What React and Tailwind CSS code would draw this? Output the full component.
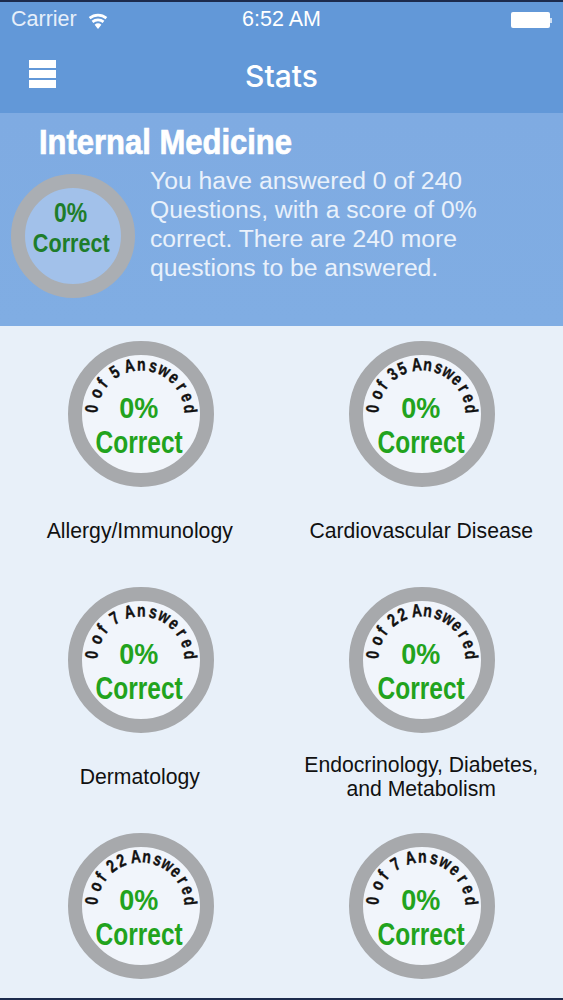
import React from 'react';

const sans = 'font-["Liberation_Sans",Arial,sans-serif]';

const topics = [
  { name: 'Allergy/Immunology', total: 5 },
  { name: 'Cardiovascular Disease', total: 35 },
  { name: 'Dermatology', total: 7 },
  { name: 'Endocrinology, Diabetes, and Metabolism', total: 22 },
  { name: '', total: 22 },
  { name: '', total: 7 },
];

// spread the letters evenly over the top of the ring, spaces count for less
function arcLetters(label) {
  const chars = label.split('');
  const gaps = chars.slice(1).map((c, i) => (c === ' ' || chars[i] === ' ' ? 0.675 : 1));
  const sum = gaps.reduce((a, b) => a + b, 0);
  const step = 168 / sum;
  let angle = -84;
  return chars.map((c, i) => {
    if (i > 0) angle += gaps[i - 1] * step;
    return { c, angle };
  });
}

function Wifi() {
  return (
    <svg width="22" height="17" viewBox="2 0 18 16" fill="white">
      <path d="M11 16l-3.2-4.1a5 5 0 0 1 6.4 0z" />
      <path d="M6.6 10.3L5 8.2a9.4 9.4 0 0 1 12 0l-1.6 2.1a6.8 6.8 0 0 0-8.8 0z" />
      <path d="M3.9 6.8L2.3 4.7a13.6 13.6 0 0 1 17.4 0l-1.6 2.1a11 11 0 0 0-14.2 0z" />
    </svg>
  );
}

function StatusBar() {
  return (
    <div className="relative flex h-[36px] items-center justify-between pl-[11px] pr-[11px] text-white">
      <div className="flex items-center gap-[10px]">
        <span className="text-[21.5px] leading-none text-[#e6effa]">Carrier</span>
        <Wifi />
      </div>
      <span className="absolute left-[242px] text-[21.5px] leading-none">6:52 AM</span>
      <div className="flex items-center">
        <div className="h-[16px] w-[39px] rounded-[2px] bg-white" />
        <div className="h-[5px] w-[2px] bg-white/70" />
      </div>
    </div>
  );
}

function NavBar() {
  return (
    <div className="relative flex h-[75px] items-center justify-center">
      <div className="absolute left-[29px] top-[22px] flex w-[27px] flex-col gap-[2px]">
        <div className="h-[8px] bg-white" />
        <div className="h-[8px] bg-white" />
        <div className="h-[8px] bg-white" />
      </div>
      <h1 className="font-['Inter',sans-serif] text-[30px] font-medium leading-none text-white">Stats</h1>
    </div>
  );
}

function Hero() {
  return (
    <div className="h-[213px] bg-gradient-to-b from-[#7fabe2] to-[#80ade3] pl-[11px]">
      <h2 className="ml-[28px] inline-block origin-left scale-x-[0.885] whitespace-nowrap pt-[10px] text-[35px] font-bold leading-[38px] text-white [-webkit-text-stroke:0.7px_white]">
        Internal Medicine
      </h2>
      <div className="mt-[13px] flex">
        <div className="flex h-[124px] w-[124px] shrink-0 flex-col items-center rounded-full border-[14px] border-[#aaaeb3] bg-[#a2c1ea] pt-[10px] font-bold text-[#1e7d2a]">
          <span className="-ml-[4px] scale-x-[0.85] text-[27px] leading-[30px]">0%</span>
          <span className="-ml-[4px] scale-x-[0.83] text-[26px] leading-[30px]">Correct</span>
        </div>
        <p className="ml-[15px] -mt-[8px] w-[345px] text-[24.7px] leading-[29px] text-[#e9f1fb]">
          You have answered 0 of 240 Questions, with a score of 0% correct. There are 240 more questions to be answered.
        </p>
      </div>
    </div>
  );
}

function Ring({ total }) {
  return (
    <div className="relative flex h-[146px] w-[146px] flex-col items-center rounded-full border-[14px] border-[#a7a9ac] bg-[#f1f5fb] pt-[36px] font-bold text-[#22a31d]">
      <svg className="absolute -left-[14px] -top-[14px]" width="146" height="146" viewBox="0 0 146 146">
        {arcLetters(`0 of ${total} Answered`).map((l, i) => (
          <text
            key={i}
            transform={`rotate(${l.angle} 73 73) translate(73 29.5) scale(0.78 1)`}
            fontFamily="Liberation Sans, Arial, sans-serif"
            fontWeight="700"
            fontSize="18"
            fill="#111"
            stroke="#111"
            strokeWidth="0.4"
            textAnchor="middle"
          >
            {l.c}
          </text>
        ))}
      </svg>
      <span className="-ml-[4px] scale-x-[0.9] text-[30px] leading-[34px]">0%</span>
      <span className="-ml-[3px] scale-x-[0.79] text-[31px] leading-[36px]">Correct</span>
    </div>
  );
}

function Topic({ topic }) {
  return (
    <div className="flex flex-col items-center">
      <Ring total={topic.total} />
      <div className="-ml-[2px] flex h-[88px] w-full items-center justify-center px-[8px] text-center text-[21.2px] leading-[24px] text-[#111]">
        {topic.name}
      </div>
    </div>
  );
}

export default function App() {
  return (
    <div className={`h-[1000px] w-[563px] overflow-hidden border-y-2 border-[#1c2b4d] bg-[#e8f0f9] ${sans}`}>
      <div className="bg-[#6298d8]">
        <StatusBar />
        <NavBar />
      </div>
      <Hero />
      <div className="grid grid-cols-2 gap-y-[12px] pt-[15px]">
        {topics.map((t, i) => (
          <Topic key={i} topic={t} />
        ))}
      </div>
    </div>
  );
}
